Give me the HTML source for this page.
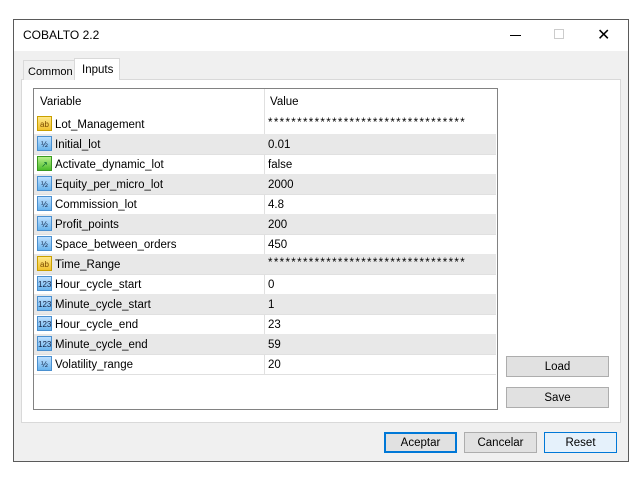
<!DOCTYPE html><html><head><style>
body{margin:0;width:640px;height:480px;background:#fff;font-family:"Liberation Sans",sans-serif;font-size:11.5px;color:#000;position:relative;overflow:hidden}
.a{position:absolute;box-sizing:border-box}
.win{left:13px;top:19px;width:616px;height:443px;border:1px solid #5a5a5a;background:#f0f0f0}
.row{position:absolute;left:0;width:462px;height:20px;border-bottom:1px solid #e0e0e0}
.row.g{background:#e8e8e8}
.row span{position:absolute;top:5px}
.row span.st{top:3px;letter-spacing:1.35px}
.ic{position:absolute;left:3px;top:2px;width:15px;height:15px;font-size:8px;line-height:15px;text-align:center;color:#124;border:1px solid #4a90d0;background:linear-gradient(#bfe0ff,#6ab4ee);box-sizing:border-box}
.ic.ab{border-color:#c9a000;background:linear-gradient(#ffe88a,#f2c230);color:#7a4a00}
.ic.bo{border-color:#3a9a20;background:linear-gradient(#b8f08a,#4cbc2c);color:#063}
.btn{position:absolute;border:1px solid #adadad;background:#e1e1e1;text-align:center;line-height:21px;box-sizing:border-box}
</style></head><body>
<div class="a win"></div>
<div class="a" style="left:14px;top:20px;width:614px;height:31px;background:#fff"></div>
<div class="a" style="left:23px;top:28px;font-size:12px">COBALTO 2.2</div>
<div class="a" style="left:510px;top:35px;width:11px;height:1px;background:#000"></div>
<div class="a" style="left:554px;top:29px;width:10px;height:10px;border:1px solid #ccc"></div>
<div class="a" style="left:597px;top:25px;font-size:16px">✕</div>
<div class="a" style="left:21px;top:79px;width:600px;height:344px;background:#fff;border:1px solid #d9d9d9"></div>
<div class="a" style="left:23px;top:60px;width:52px;height:20px;border:1px solid #d9d9d9;border-bottom:none;background:#f0f0f0;padding:5px 0 0 4px;font-size:11px">Common</div>
<div class="a" style="left:74px;top:58px;width:46px;height:22px;border:1px solid #d9d9d9;border-bottom:none;background:#fff;padding:5px 0 0 7px">Inputs</div>
<div class="a" style="left:33px;top:88px;width:465px;height:322px;border:1px solid #828282;background:#fff">
<div class="row" style="top:0;height:25px;border:none"><span style="left:6px;top:7px">Variable</span><span style="left:236px;top:7px">Value</span></div>
<div class="a" style="left:230px;top:0;width:1px;height:285px;background:#e0e0e0"></div>
<div class="row" style="top:25px"><div class="ic ab">ab</div><span style="left:21px">Lot_Management</span><span class="st" style="left:234px">**********************************</span></div>
<div class="row g" style="top:45px"><div class="ic">½</div><span style="left:21px">Initial_lot</span><span style="left:234px">0.01</span></div>
<div class="row" style="top:65px"><div class="ic bo">↗</div><span style="left:21px">Activate_dynamic_lot</span><span style="left:234px">false</span></div>
<div class="row g" style="top:85px"><div class="ic">½</div><span style="left:21px">Equity_per_micro_lot</span><span style="left:234px">2000</span></div>
<div class="row" style="top:105px"><div class="ic">½</div><span style="left:21px">Commission_lot</span><span style="left:234px">4.8</span></div>
<div class="row g" style="top:125px"><div class="ic">½</div><span style="left:21px">Profit_points</span><span style="left:234px">200</span></div>
<div class="row" style="top:145px"><div class="ic">½</div><span style="left:21px">Space_between_orders</span><span style="left:234px">450</span></div>
<div class="row g" style="top:165px"><div class="ic ab">ab</div><span style="left:21px">Time_Range</span><span class="st" style="left:234px">**********************************</span></div>
<div class="row" style="top:185px"><div class="ic">123</div><span style="left:21px">Hour_cycle_start</span><span style="left:234px">0</span></div>
<div class="row g" style="top:205px"><div class="ic">123</div><span style="left:21px">Minute_cycle_start</span><span style="left:234px">1</span></div>
<div class="row" style="top:225px"><div class="ic">123</div><span style="left:21px">Hour_cycle_end</span><span style="left:234px">23</span></div>
<div class="row g" style="top:245px"><div class="ic">123</div><span style="left:21px">Minute_cycle_end</span><span style="left:234px">59</span></div>
<div class="row" style="top:265px"><div class="ic">½</div><span style="left:21px">Volatility_range</span><span style="left:234px">20</span></div>
</div>
<div class="btn" style="left:506px;top:356px;width:103px;height:21px">Load</div>
<div class="btn" style="left:506px;top:387px;width:103px;height:21px">Save</div>
<div class="btn" style="left:384px;top:432px;width:73px;height:21px;border:2px solid #0078d7;line-height:19px">Aceptar</div>
<div class="btn" style="left:464px;top:432px;width:73px;height:21px">Cancelar</div>
<div class="btn" style="left:544px;top:432px;width:73px;height:21px;border-color:#0078d7;background:#e5f1fb">Reset</div>
</body></html>
